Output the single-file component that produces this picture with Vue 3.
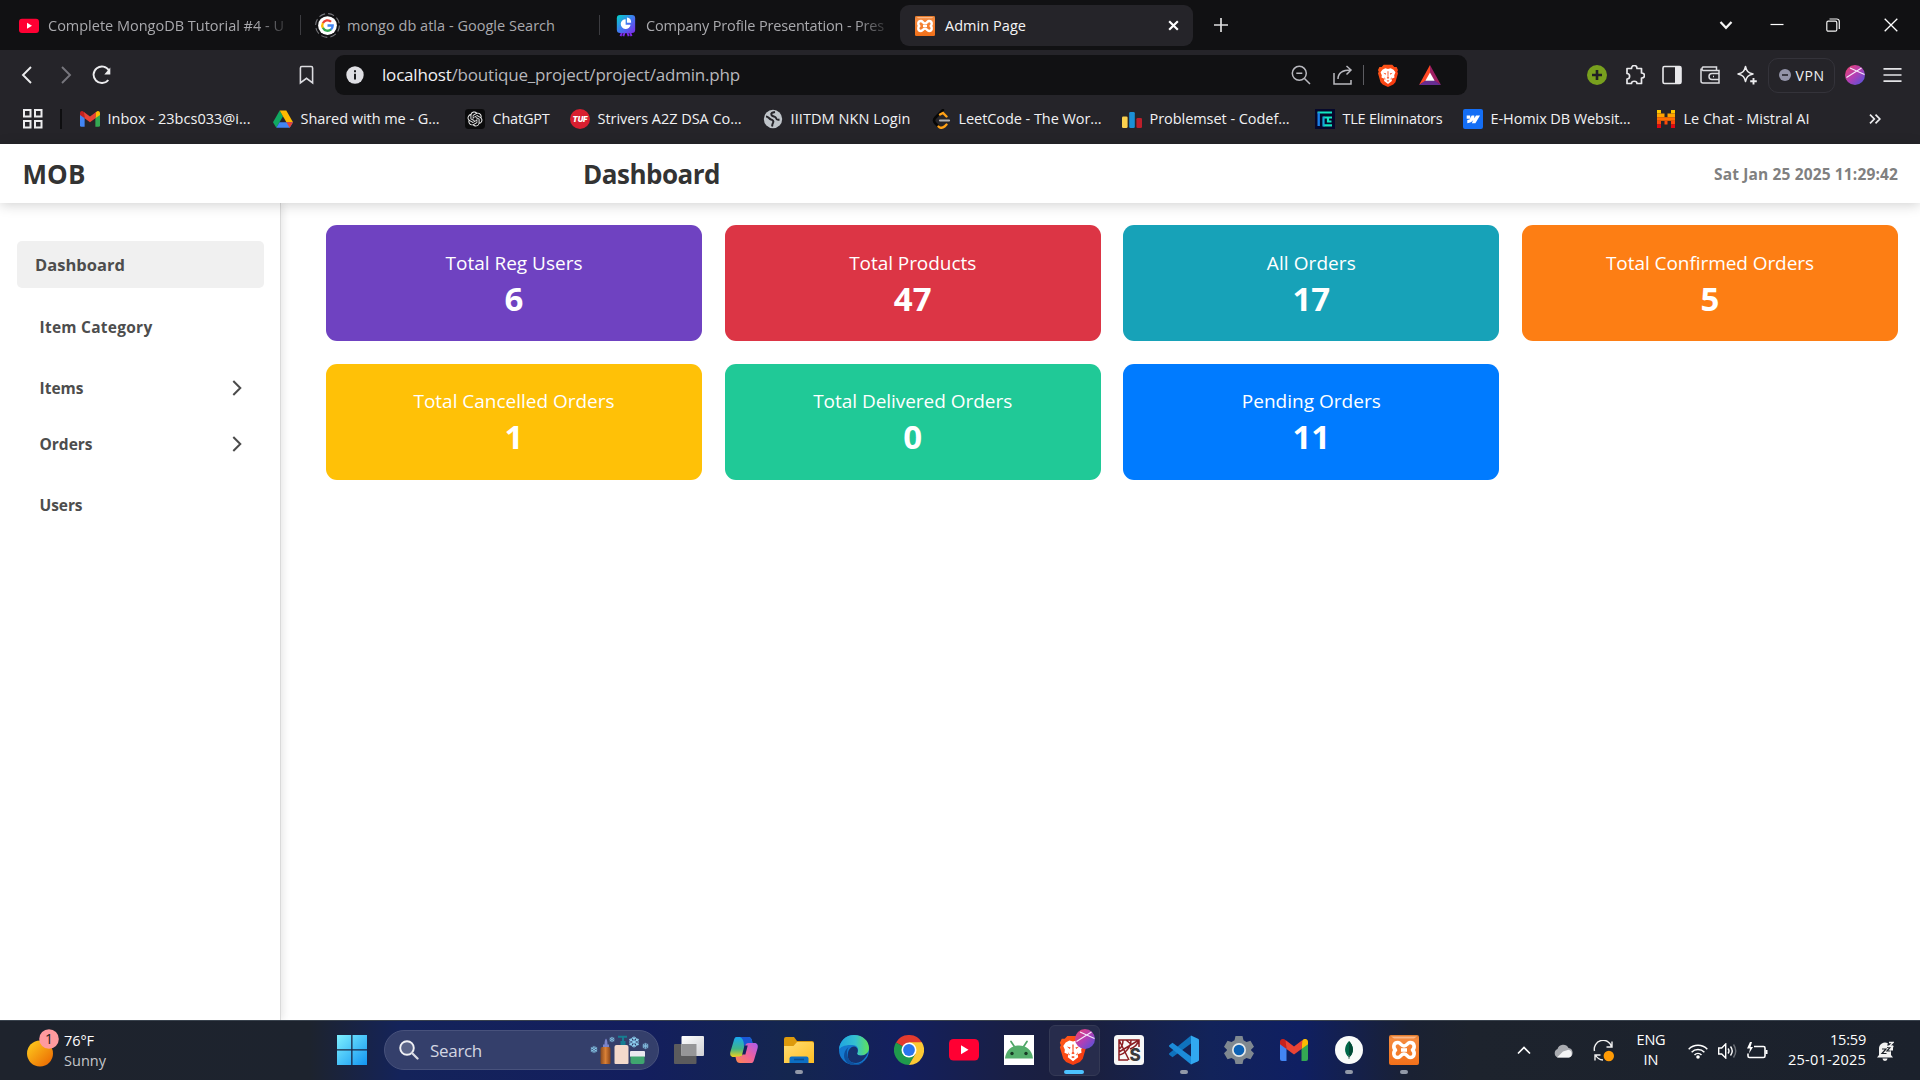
<script setup>
// Sets letter-spacing so that a label takes exactly its given width.
const vFit = {
  mounted(el, { value }) {
    if (!value) return
    const natural = el.getBoundingClientRect().width
    el.style.letterSpacing = (value - natural) / el.textContent.length + 'px'
  },
}

const tabs = [
  { icon: 'youtube', title: 'Complete MongoDB Tutorial #4 - U', w: 236 },
  { icon: 'google', title: 'mongo db atla - Google Search', w: 208 },
  { icon: 'deck', title: 'Company Profile Presentation - Pres', w: 238 },
]

const bookmarks = [
  { icon: 'gmail', title: 'Inbox - 23bcs033@i...', w: 143, slot: 193 },
  { icon: 'drive', title: 'Shared with me - G...', w: 139, slot: 192 },
  { icon: 'chatgpt', title: 'ChatGPT', w: 57, slot: 105 },
  { icon: 'tuf', title: 'Strivers A2Z DSA Co...', w: 144, slot: 193 },
  { icon: 'globe', title: 'IIITDM NKN Login', w: 120, slot: 168 },
  { icon: 'leetcode', title: 'LeetCode - The Wor...', w: 143, slot: 191 },
  { icon: 'codeforces', title: 'Problemset - Codef...', w: 140, slot: 193 },
  { icon: 'tle', title: 'TLE Eliminators', w: 100, slot: 148 },
  { icon: 'webflow', title: 'E-Homix DB Websit...', w: 140, slot: 193 },
  { icon: 'mistral', title: 'Le Chat - Mistral AI', w: 126, slot: 211 },
]

const menu = [
  { label: 'Item Category', w: 113 },
  { label: 'Items', w: 44, arrow: true },
  { label: 'Orders', w: 53, arrow: true, tight: true },
  { label: 'Users', w: 43 },
]

const cards = [
  { label: 'Total Reg Users', value: 6, w: 137, color: '#6f42c1' },
  { label: 'Total Products', value: 47, w: 127, color: '#dc3545' },
  { label: 'All Orders', value: 17, w: 89, color: '#17a2b8' },
  { label: 'Total Confirmed Orders', value: 5, w: 208, color: '#fd7e14' },
  { label: 'Total Cancelled Orders', value: 1, w: 201, color: '#ffc107' },
  { label: 'Total Delivered Orders', value: 0, w: 199, color: '#20c997' },
  { label: 'Pending Orders', value: 11, w: 139, color: '#007bff' },
]

const apps = [
  { icon: 'taskview' },
  { icon: 'copilot' },
  { icon: 'folder', open: true },
  { icon: 'edge' },
  { icon: 'chrome' },
  { icon: 'youtube' },
  { icon: 'android' },
  { icon: 'brave', active: true },
  { icon: 'spyder' },
  { icon: 'vscode', open: true },
  { icon: 'settings' },
  { icon: 'gmail' },
  { icon: 'mongo', open: true },
  { icon: 'xampp', open: true },
]
</script>

<template>
  <svg class="defs" aria-hidden="true">
    <defs>
      <linearGradient id="g-deck" x1="0" y1="0" x2="1" y2="1"><stop offset="0" stop-color="#00d5c8" /><stop offset=".5" stop-color="#3f7af0" /><stop offset="1" stop-color="#7d2ae8" /></linearGradient>
      <linearGradient id="g-profile" x1="0" y1="0" x2="1" y2="1"><stop offset="0" stop-color="#f0436a" /><stop offset=".5" stop-color="#b23fb5" /><stop offset="1" stop-color="#4655e0" /></linearGradient>
      <linearGradient id="g-win" x1="0" y1="0" x2="1" y2="1"><stop offset="0" stop-color="#7ef0ff" /><stop offset="1" stop-color="#1295f2" /></linearGradient>
      <linearGradient id="g-sun" x1="0" y1="0" x2="1" y2="1"><stop offset="0" stop-color="#ffd21f" /><stop offset="1" stop-color="#ea6100" /></linearGradient>
      <linearGradient id="g-tv" x1="0" y1="0" x2="1" y2="1"><stop offset="0" stop-color="#fff" /><stop offset="1" stop-color="#cfd0d4" /></linearGradient>
      <linearGradient id="g-fold" x1="0" y1="0" x2="1" y2="1"><stop offset="0" stop-color="#ffdd74" /><stop offset="1" stop-color="#ffbe22" /></linearGradient>
      <linearGradient id="g-edge" x1="0" y1=".3" x2="1" y2=".3"><stop offset="0" stop-color="#1fa5e0" /><stop offset=".55" stop-color="#35c1d0" /><stop offset="1" stop-color="#5fe35a" /></linearGradient>
      <linearGradient id="g-brave" x1="0" y1="0" x2="1" y2="1"><stop offset="0" stop-color="#ff5a1a" /><stop offset="1" stop-color="#f5350f" /></linearGradient>
      <linearGradient id="g-cop1" x1="0" y1="0" x2="0" y2="1"><stop offset="0" stop-color="#19a7f2" /><stop offset=".6" stop-color="#41b586" /><stop offset="1" stop-color="#f2d21c" /></linearGradient>
      <linearGradient id="g-cop2" x1="0" y1="1" x2="1" y2="0"><stop offset="0" stop-color="#ff8a4a" /><stop offset=".5" stop-color="#f0619c" /><stop offset="1" stop-color="#a95cf0" /></linearGradient>
      <linearGradient id="g-xampp" x1="0" y1="0" x2="0" y2="1"><stop offset="0" stop-color="#e07a2c" /><stop offset=".15" stop-color="#f58a3e" /><stop offset="1" stop-color="#f2701a" /></linearGradient>
      <linearGradient id="g-amber" x1="0" x2="1"><stop offset="0" stop-color="#8a4a1e" /><stop offset=".5" stop-color="#d98036" /><stop offset="1" stop-color="#8a4519" /></linearGradient>

      <symbol id="i-youtube" viewBox="0 0 30 30"><rect y="4" width="30" height="21.5" rx="4.5" fill="#ff0033" /><path d="M12 10.3v9l7.5-4.5z" fill="#fff" /></symbol>
      <symbol id="i-google" viewBox="0 0 24 24">
        <circle cx="12" cy="12" r="11.4" fill="none" stroke="#77777c" stroke-width="1" stroke-dasharray="6 3" /><circle cx="12" cy="12" r="9" fill="#fff" />
        <g fill="none" stroke-width="2.2"><path d="M15.4 8.4A5 5 0 0 0 7.5 9.8" stroke="#ea4335" /><path d="M7.6 9.6a5 5 0 0 0 0 4.8" stroke="#fbbc05" /><path d="M7.6 14.2a5 5 0 0 0 7.8 1.6" stroke="#34a853" /><path d="M12 12h5a5 5 0 0 1-1.7 3.9" stroke="#4285f4" /></g>
      </symbol>
      <symbol id="i-deck" viewBox="0 0 20 24"><path d="M6 18l-2 5M14 18l2 5M9 18l-2 5M11 18l2 5" stroke="#7d2ae8" stroke-width="2.2" /><rect width="20" height="19.5" rx="3.5" fill="url(#g-deck)" /><path d="M9.600 4.500a5.400 5.400 0 1 0 5.400 6.200h-5.400z" fill="#fff" /><path d="M11 2.800a5.400 5.400 0 0 1 4.600 5.600H11z" fill="#fff" /></symbol>
      <symbol id="i-xampp" viewBox="0 0 30 30"><rect width="30" height="30" rx="2" fill="url(#g-xampp)" /><path d="M2 1.500h26l-3 2H5z" fill="#fbb787" /><g fill="none" stroke="#fff" stroke-width="3.600" stroke-linejoin="round"><path d="M9 7.500c2.500 0 3 3.500 6 3.500s3.500-3.500 6-3.500c5 0 5 5.500 2.500 7.500 2.500 2 2.500 7.500-2.500 7.500-2.500 0-3-3.500-6-3.500s-3.500 3.500-6 3.500c-5 0-5-5.500-2.500-7.500C4 13 4 7.500 9 7.500z" /><path d="M12 15h6" /></g></symbol>
      <symbol id="i-gmail" viewBox="0 0 28 22"><path d="M0 3.500V20a2 2 0 0 0 2 2h4.500V9z" fill="#4285f4" /><path d="M28 3.500V20a2 2 0 0 1-2 2h-4.500V9z" fill="#34a853" /><path d="M21.500 2.500V10L28 5.300V3c0-3-3-4-5-2.300z" fill="#fbbc04" /><path d="M6.500 2.500V10L0 5.300V3C0 0 3-1 5 .7z" fill="#c5221f" /><path d="M5.500 1.100L14 7.600l8.500-6.500-1 8.900-7.500 5.600L6.500 10z" fill="#ea4335" /></symbol>
      <symbol id="i-drive" viewBox="0 0 20 20"><path d="M6.700 1.500L0 13.300l3.300 5.500L10 7.200z" fill="#11a861" /><path d="M6.700 1.500h6.600L20 13.300h-6.600z" fill="#ffba00" /><path d="M6.500 13.300H20l-3.300 5.500H3.300z" fill="#4285f4" /><path d="M13.400 13.300H20l-3.300 5.500z" fill="#ea4335" /></symbol>
      <symbol id="i-chatgpt" viewBox="-4 -4 32 32"><rect x="-4" y="-4" width="32" height="32" rx="5.500" fill="#0b0b0c" /><path fill="#f0f0f0" d="M22.2819 9.8211a5.9847 5.9847 0 0 0-.5157-4.9108 6.0462 6.0462 0 0 0-6.5098-2.9A6.0651 6.0651 0 0 0 4.9807 4.1818a5.9847 5.9847 0 0 0-3.9977 2.9 6.0462 6.0462 0 0 0 .7427 7.0966 5.98 5.98 0 0 0 .511 4.9107 6.051 6.051 0 0 0 6.5146 2.9001A5.9847 5.9847 0 0 0 13.2599 24a6.0557 6.0557 0 0 0 5.7718-4.2058 5.9894 5.9894 0 0 0 3.9977-2.9001 6.0557 6.0557 0 0 0-.7475-7.0729zm-9.022 12.6081a4.4755 4.4755 0 0 1-2.8764-1.0408l.1419-.0804 4.7783-2.7582a.7948.7948 0 0 0 .3927-.6813v-6.7369l2.02 1.1686a.071.071 0 0 1 .038.052v5.5826a4.504 4.504 0 0 1-4.4945 4.4944zm-9.6607-4.1254a4.4708 4.4708 0 0 1-.5346-3.0137l.142.0852 4.783 2.7582a.7712.7712 0 0 0 .7806 0l5.8428-3.3685v2.3324a.0804.0804 0 0 1-.0332.0615L9.74 19.9502a4.4992 4.4992 0 0 1-6.1408-1.6464zM2.3408 7.8956a4.485 4.485 0 0 1 2.3655-1.9728V11.6a.7664.7664 0 0 0 .3879.6765l5.8144 3.3543-2.0201 1.1685a.0757.0757 0 0 1-.071 0l-4.8303-2.7865A4.504 4.504 0 0 1 2.3408 7.872zm16.5963 3.8558L13.1038 8.364 15.1192 7.2a.0757.0757 0 0 1 .071 0l4.8303 2.7913a4.4944 4.4944 0 0 1-.6765 8.1042v-5.6772a.79.79 0 0 0-.407-.667zm2.0107-3.0231l-.142-.0852-4.7735-2.7818a.7759.7759 0 0 0-.7854 0L9.409 9.2297V6.8974a.0662.0662 0 0 1 .0284-.0615l4.8303-2.7866a4.4992 4.4992 0 0 1 6.6802 4.66zM8.3065 12.863l-2.02-1.1638a.0804.0804 0 0 1-.038-.0567V6.0742a4.4992 4.4992 0 0 1 7.3757-3.4537l-.142.0805L8.704 5.459a.7948.7948 0 0 0-.3927.6813zm1.0976-2.3654l2.602-1.4998 2.6069 1.4998v2.9994l-2.5974 1.4997-2.6067-1.4997Z" /></symbol>
      <symbol id="i-tuf" viewBox="0 0 20 20"><circle cx="10" cy="10" r="10" fill="#d81f30" /><text x="10" y="12.700" text-anchor="middle" font-family="Inter, sans-serif" font-weight="900" font-style="italic" font-size="7.600" fill="#fff">TUF</text></symbol>
      <symbol id="i-globe" viewBox="0 0 20 20"><circle cx="10" cy="10" r="9.200" fill="#bfc4c9" /><path d="M3 7.500c2.500 0 3 2.500 5 3s3 2 2 3.500-.5 2-1 3.500M12 3c-2.500.500-4.500 1-3.500 3s4 1 4.500 3 1.500 2 3.500 1.500" stroke="#26252a" stroke-width="2" fill="none" /></symbol>
      <symbol id="i-leetcode" viewBox="0 0 20 20"><path d="M12 1L4.500 8.500c-2 2-2 4 0 6l3 3" fill="none" stroke="#070707" stroke-width="2.500" stroke-linecap="round" /><path d="M9 5.500l3-1.500 3.500 3.500M7.500 17.500c2 2 4 1.500 6 0l2-2" fill="none" stroke="#ffa116" stroke-width="2.400" stroke-linecap="round" /><path d="M9 11.500h9" stroke="#b3b3b3" stroke-width="2.200" stroke-linecap="round" /></symbol>
      <symbol id="i-codeforces" viewBox="0 0 20 20"><rect y="7.500" width="5.600" height="11.500" rx="1.300" fill="#fbd04e" /><rect x="7.200" y="3" width="5.600" height="16" rx="1.300" fill="#1b90d6" /><rect x="14.400" y="9" width="5.600" height="10" rx="1.300" fill="#bd1f2b" /></symbol>
      <symbol id="i-tle" viewBox="0 0 20 20"><rect width="20" height="20" fill="#06082c" /><path d="M2.500 3.500H17M8.500 16.300H17M8.500 8.500H17M13 9.500v3h3.500" fill="none" stroke="#12e6c0" stroke-width="2.200" /><path d="M3.700 3.500V17" stroke="#1a7fe8" stroke-width="2.400" /><path d="M8.500 7.500v10" stroke="#13a9d8" stroke-width="2.200" /></symbol>
      <symbol id="i-webflow" viewBox="0 0 20 20"><rect width="20" height="20" rx="2" fill="#146ef5" /><path d="M17 6.500l-4.600 7.700H8.800l1.500-3.200C9 12.700 7 14 4.300 14.200v-3.100s2-.1 3-1.300H3.700V6.500h3.500v2.700l1.500-2.700h2.600v2.700l1.700-2.700z" fill="#fff" /></symbol>
      <symbol id="i-mistral" viewBox="0 0 20 20"><path d="M1 1h4v3.600H1zM15 1h4v3.600h-4z" fill="#ffc800" /><path d="M1 4.600h7.500v3.600H1zM11.500 4.600H19v3.600h-7.500z" fill="#ffa300" /><path d="M1 8.200h18v3.600H1z" fill="#ff6f00" /><path d="M1 11.800h4v3.600H1zM8.500 11.800h3v3.600h-3zM15 11.800h4v3.600h-4z" fill="#fb4a0a" /><path d="M1 15.400h4V19H1zM15 15.400h4V19h-4z" fill="#e30613" /></symbol>
      <symbol id="i-brave" viewBox="0 0 28 32">
        <path d="M8 1h12l2.800 3L26 4l2 4.200-1 2.600 1 2.200-3.600 12.300-3 3.400L14 32l-7.400-3.300-3-3.400L0 13l1-2.200L0 8.200 2 4h3.200z" fill="url(#g-brave)" />
        <path d="M14 7l3.800-1.200 4 2.200 2.600 3.600-1.700 4 .4 3.200-4 1.800.4 3.200L14 28l-5.500-4.200.4-3.200-4-1.800.4-3.200-1.700-4L6.200 8l4-2.200z" fill="#fff" />
        <path d="M7.500 12.300l4 .9-1 1.700zM20.500 12.300l-4 .9 1 1.700zM13.300 10h1.400l-.2 8 1.300 1.500-1.800 1-1.800-1 1.300-1.500zM8.500 18l2.300 3.300-1.300.2zM19.500 18l-2.300 3.300 1.300.2zM12 23.500l2-1 2 1-2 1.300z" fill="#f9481a" />
      </symbol>
      <symbol id="i-taskview" viewBox="0 0 30 30"><rect y="9" width="22.500" height="20" rx="1" fill="#5b5b5d" /><rect x="7.500" y="1" width="22.500" height="20" rx="1" fill="url(#g-tv)" /><path d="M7.500 9h15v12h-15z" fill="#969698" /></symbol>
      <symbol id="i-copilot" viewBox="0 0 30 30">
        <path d="M7.500 2H19c2.200 0 3.200 1 3.800 3l.8 3.500h-4.200c-2 0-3 1-3.500 3l-2 7.500c-.6 2-1.600 3-3.600 3H4.500C1.500 22 .6 19.500 1.500 16.500l3-10C5.200 3.800 5.800 2 7.500 2z" fill="url(#g-cop1)" /><path d="M14 2h5c2.200 0 3.200 1 3.800 3l.8 3.500h-4.200c-2 0-3 1-3.500 3L15 15c0-5 .5-11-4-13z" fill="#1a57d6" />
        <path d="M22.500 28H11c-2.200 0-3.200-1-3.800-3l-.8-3.500h4.200c2 0 3-1 3.500-3l2-7.500c.6-2 1.600-3 3.600-3h5.800c3 0 3.900 2.500 3 5.500l-3 10c-.7 2.700-1.300 4.500-3 4.500z" fill="url(#g-cop2)" />
        <path d="M15.500 10.500h3.200l-2.300 9h-3.200z" fill="#14225c" />
      </symbol>
      <symbol id="i-folder" viewBox="0 0 30 30"><path d="M0 4a2 2 0 0 1 2-2h8l3 4h15a2 2 0 0 1 2 2v6H0z" fill="#dd9a0c" /><path d="M0 11h9.500l3.500-4h15a2 2 0 0 1 2 2v19H0z" fill="url(#g-fold)" /><path d="M5.500 28v-4.500a2 2 0 0 1 2-2h15a2 2 0 0 1 2 2V28z" fill="#0c6fc4" /><path d="M10 24.500h10" stroke="#0a4f92" stroke-width="1.600" /></symbol>
      <symbol id="i-edge" viewBox="0 0 30 30"><circle cx="15" cy="15" r="15" fill="#1479cf" /><path d="M0 14.500C.5 6 7 0 15 0c9 0 15 6 15 13 0 5-4 7.500-7.500 7.500-4 0-5-1.700-4-3 1.500-3 .5-7.500-5.500-7.500C6.500 9.500 1 12 0 14.500z" fill="url(#g-edge)" /><path d="M18.500 17.500c-1 1.300 0 3 4 3 2.500 0 4.700-1 6-3 .8 0-3 10-11.500 10.500-7 0-9-5-8-10 .5-3.500 3-6.500 6-6.500 3.500.5 4.500 3.500 3.500 6z" fill="#16316e" /><path d="M9.500 12C7 16 7.500 24 13 27.500c4.500 2.500 9 1 12-1.500-5 7-14 4.500-17.500 1-4-4-3-11 2-15z" fill="#0e4f9c" /></symbol>
      <symbol id="i-chrome" viewBox="0 0 30 30"><path d="M15 15L2 7.500A15 15 0 0 1 28 7.500z" fill="#e33b2e" /><path d="M15 15L2 7.500A15 15 0 0 0 15 30l6.500-11z" fill="#1f9a4c" /><path d="M15 7.500h13A15 15 0 0 1 15 30l6.500-11.200z" fill="#fcc934" /><path d="M15 15V7.500H28L21.500 19z" fill="#fcc934" /><circle cx="15" cy="15" r="7.500" fill="#fff" /><circle cx="15" cy="15" r="5.900" fill="#2a75ec" /></symbol>
      <symbol id="i-android" viewBox="0 0 30 30"><path d="M0 0h30v30H0z" fill="#fff" /><path d="M7 6.500l4 6M23 6.500l-4 6" stroke="#4fa567" stroke-width="1.700" stroke-linecap="round" /><path d="M1 23.500C2 14.500 8 10.500 15 10.500s13 4 14 13z" fill="#55ae6c" /><circle cx="8" cy="18.500" r="1.700" fill="#173a24" /><circle cx="22" cy="18.500" r="1.700" fill="#173a24" /></symbol>
      <symbol id="i-spyder" viewBox="0 0 30 30"><rect width="30" height="30" rx="3.500" fill="#f7f7f7" /><g fill="none" stroke="#8c1d22" stroke-width="1.500"><path d="M14 25H5V5h20v7M5 5l10 20M9 5c0 5-2 8-4 9M17 5c0 7-6 14-12 15M25 5L5 17M25 5c-1 4-4 7-9 9M12 5l6 5" /></g><text x="15.500" y="26" font-family="Inter, sans-serif" font-weight="800" font-size="17" fill="#3b3b3b">S</text></symbol>
      <symbol id="i-vscode" viewBox="0 0 30 30"><path d="M22 .5l7 3.200c.600.300 1 .8 1 1.500v19.600c0 .7-.4 1.200-1 1.500l-7 3.200z" fill="#31a8f0" /><path d="M22 .5v8L3.500 22.300.3 19.700c-.4-.4-.4-1 0-1.400z" fill="#0f72bd" /><path d="M22 29.500v-8L3.500 7.700.3 10.300c-.4.400-.4 1 0 1.400z" fill="#1c8bd8" /></symbol>
      <symbol id="i-settings" viewBox="0 0 30 30"><path d="M11.500 1h7l1 4.200 3 1.700 4-1.200 3.500 6-3 3v.600l3 3-3.500 6-4-1.200-3 1.700-1 4.200h-7l-1-4.200-3-1.700-4 1.200-3.500-6 3-3v-.600l-3-3 3.500-6 4 1.200 3-1.700z" fill="#7f8890" /><circle cx="15" cy="15" r="7" fill="#e4e8ea" /><circle cx="15" cy="15" r="5.300" fill="#0d62b5" /></symbol>
      <symbol id="i-mongo" viewBox="0 0 30 30"><circle cx="15" cy="15" r="14" fill="#f9fbfa" /><path d="M15 6c5 5 5.500 12 0 16.500C9.500 18 10 11 15 6z" fill="#00684a" /><path d="M15 6c5 5 5.500 12 0 16.500z" fill="#024a36" /><path d="M15 20v4" stroke="#5c7a6e" stroke-width="1" /></symbol>
      <symbol id="i-profile" viewBox="0 0 20 20"><circle cx="10" cy="10" r="10" fill="url(#g-profile)" /><path d="M1.500 12.500L16.500 3M5 3l14.500 6.500" stroke="#f6e9fb" stroke-width="1.100" /></symbol>
      <symbol id="i-flake" viewBox="-10 -10 20 20"><g stroke="#8fd3f2" stroke-width="1.800" fill="none"><path id="arm" d="M0-9V9M-3-7.500L0-4.500 3-7.500M-3 7.500L0 4.500 3 7.500" /><use href="#arm" transform="rotate(60)" /><use href="#arm" transform="rotate(120)" /></g></symbol>
    </defs>
  </svg>

  <div class="screen">
    <header class="browser">
      <div class="tabstrip">
        <div v-for="t in tabs" :key="t.icon" class="tab">
          <span class="tab-icon"><svg :class="['fav', t.icon]"><use :href="'#i-' + t.icon" /></svg></span>
          <span class="tab-title"><span v-fit="t.w">{{ t.title }}</span></span>
        </div>
        <div class="tab current">
          <span class="tab-icon"><svg class="fav"><use href="#i-xampp" /></svg></span>
          <span class="tab-title"><span v-fit="81">Admin Page</span></span>
          <svg class="close" viewBox="0 0 12 12"><path d="M2 2l8 8M10 2l-8 8" stroke="#fff" stroke-width="2" /></svg>
        </div>
        <svg class="plus" viewBox="0 0 14 14"><path d="M7 0v14M0 7h14" stroke="#dededf" stroke-width="1.700" /></svg>
        <div class="window-buttons">
          <svg viewBox="0 0 14 14"><path d="M1.500 4L7 9.800 12.500 4" fill="none" stroke="#f4f4f4" stroke-width="2.200" /></svg>
          <svg viewBox="0 0 14 14"><path d="M.5 6.500h13" stroke="#fff" stroke-width="1.200" /></svg>
          <svg viewBox="0 0 14 14"><g fill="none" stroke="#f4f4f4" stroke-width="1.200"><rect x=".8" y="3.200" width="10" height="10" rx="1.500" /><path d="M3.500 1h7.300a2.500 2.500 0 0 1 2.500 2.500v7.500" /></g></svg>
          <svg viewBox="0 0 14 14"><path d="M.7.700l12.600 12.600M13.300.7L.7 13.300" stroke="#fff" stroke-width="1.300" /></svg>
        </div>
      </div>

      <div class="toolbar">
        <div class="nav">
          <svg viewBox="0 0 20 20"><path d="M13 2L5 10l8 8" fill="none" stroke="#ececee" stroke-width="1.900" /></svg>
          <svg viewBox="0 0 20 20"><path d="M7 2l8 8-8 8" fill="none" stroke="#77767d" stroke-width="1.900" /></svg>
          <svg viewBox="0 0 20 20"><path d="M16.300 15A8.300 8.300 0 1 1 17 5.500" fill="none" stroke="#ececee" stroke-width="1.900" /><path d="M18.300 2.500v7h-6z" fill="#ececee" /></svg>
        </div>
        <svg class="mark" viewBox="0 0 16 20"><path d="M1.500 2.500q0-1.500 1.500-1.500h10q1.500 0 1.500 1.500v16L8 13.500l-6.500 5z" fill="none" stroke="#dcdce0" stroke-width="1.700" /></svg>
        <div class="address">
          <svg class="info" viewBox="0 0 18 18"><circle cx="9" cy="9" r="8.700" fill="#dfdfe4" /><path d="M9 7.700v5.800M9 4.300v2" stroke="#111214" stroke-width="1.900" /></svg>
          <span class="url"><span v-fit="358"><b>localhost</b>/boutique_project/project/admin.php</span></span>
          <svg class="a-zoom" viewBox="0 0 20 20"><g fill="none" stroke="#b9b9bf" stroke-width="1.500"><circle cx="8.300" cy="8.300" r="7" /><path d="M13.500 13.500l5.500 5.500M5.300 8.300h6" /></g></svg>
          <svg class="a-share" viewBox="0 0 20 20"><g fill="none" stroke="#b9b9bf" stroke-width="1.500"><path d="M1 8v11h17v-4M5 14c0-6 4-9 13-9M13.500 1l4.500 4-4.500 4.500" /></g></svg>
          <i class="bar"></i>
          <svg class="a-brave"><use href="#i-brave" /></svg>
          <svg class="a-bat" viewBox="0 0 22 20"><path d="M11 0L0 20l11-6.500z" fill="#ff4724" /><path d="M11 0l11 20-11-6.500z" fill="#9e1f63" /><path d="M0 20h22l-6.500-4.500h-9z" fill="#662d91" /><path d="M11 7.500l4.600 8.300H6.400z" fill="#fff" /></svg>
        </div>
        <div class="extensions">
          <svg viewBox="0 0 20 20"><circle cx="10" cy="10" r="10" fill="#78a01e" /><path d="M10 5v10M5 10h10" stroke="#202024" stroke-width="2.600" /></svg>
          <svg viewBox="0 0 20 20"><path d="M2 3.500h4.500c0-4 5.500-4 5.500 0h4.500V8c4 0 4 5 0 5v5.500h-4.500c0-3-5.500-3-5.500 0H2V14c3.500 0 3.500-5.500 0-5.500z" fill="none" stroke="#e9e9ec" stroke-width="1.700" stroke-linejoin="round" /></svg>
          <svg viewBox="0 0 20 20"><rect x="1" y="1.500" width="18" height="17" rx="1.500" fill="none" stroke="#e9e9ec" stroke-width="1.600" /><path d="M13 2h6v16h-6z" fill="#e9e9ec" /></svg>
          <svg viewBox="0 0 20 20"><g fill="none" stroke="#dcdce0" stroke-width="1.500"><path d="M16.500 5V2H3a2 2 0 0 0 0 3.500h16V18H3a2 2 0 0 1-2-2V3.500" /><path d="M19 8.500h-7a3 3 0 0 0 0 6h7" /><path d="M13 11.500h1" /></g></svg>
          <svg viewBox="0 0 20 20"><path d="M8.500 1.500c1.200 5 2.200 6 7.500 7.500-5.300 1.500-6.300 2.500-7.500 7.500C7.300 11.500 6.300 10.500 1 9c5.300-1.500 6.300-2.500 7.500-7.500z" fill="none" stroke="#ececee" stroke-width="1.500" stroke-linejoin="round" /><path d="M16.500 13v6.500M13.200 16.300h6.600" stroke="#ececee" stroke-width="1.900" /></svg>
        </div>
        <div class="vpn">
          <svg viewBox="0 0 12 12"><circle cx="6" cy="6" r="6" fill="#9394a8" /><path d="M3 6h6" stroke="#26252b" stroke-width="1.600" /></svg>
          <span v-fit="29">VPN</span>
        </div>
        <svg class="avatar"><use href="#i-profile" /></svg>
        <svg class="burger" viewBox="0 0 20 16"><path d="M.5 1.500h19M.5 8h19M.5 14.500h19" stroke="#e4e4e7" stroke-width="1.700" /></svg>
      </div>

      <div class="bookmarks">
        <svg class="grid" viewBox="0 0 20 20"><g fill="none" stroke="#ececee" stroke-width="2"><rect x="1" y="1" width="6.500" height="6.500" /><rect x="12" y="1" width="6.500" height="6.500" /><rect x="1" y="12" width="6.500" height="6.500" /><rect x="12" y="12" width="6.500" height="6.500" /></g></svg>
        <i class="bm-bar"></i>
        <div v-for="b in bookmarks" :key="b.icon" class="bookmark" :style="{ width: b.slot + 'px' }">
          <svg><use :href="'#i-' + b.icon" /></svg>
          <span v-fit="b.w">{{ b.title }}</span>
        </div>
        <svg class="more" viewBox="0 0 12 10"><path d="M1 .7L5.300 5 1 9.300M6.500.7L10.800 5 6.500 9.300" fill="none" stroke="#ececee" stroke-width="1.700" /></svg>
      </div>
    </header>

    <section class="page">
      <div class="topbar">
        <span class="brand"><span v-fit="63">MOB</span></span>
        <span class="heading"><span v-fit="137">Dashboard</span></span>
        <span class="date"><span v-fit="184">Sat Jan 25 2025 11:29:42</span></span>
      </div>
      <div class="body">
        <nav class="sidebar">
          <a class="item selected"><span v-fit="90">Dashboard</span></a>
          <a v-for="m in menu" :key="m.label" :class="['item', { tight: m.tight }]">
            <span v-fit="m.w">{{ m.label }}</span>
            <svg v-if="m.arrow" viewBox="0 0 10 16"><path d="M1.300 1l7 7-7 7" fill="none" stroke="#4b4b4b" stroke-width="2" /></svg>
          </a>
        </nav>
        <main class="cards">
          <article v-for="c in cards" :key="c.label" class="card" :style="{ background: c.color }">
            <p><span v-fit="c.w">{{ c.label }}</span></p>
            <strong>{{ c.value }}</strong>
          </article>
        </main>
      </div>
    </section>

    <footer class="taskbar">
      <div class="weather">
        <svg viewBox="0 0 32 44"><circle cx="13" cy="26.500" r="13" fill="url(#g-sun)" /><circle cx="22" cy="12" r="9.800" fill="#ff9a9e" /><text x="22" y="17" text-anchor="middle" font-size="14" font-family="Open Sans, sans-serif" fill="#1c1c1c">1</text></svg>
        <div><span class="temp"><span v-fit="30">76°F</span></span><span class="sky"><span v-fit="42">Sunny</span></span></div>
      </div>
      <svg class="start" viewBox="0 0 30 30"><path d="M0 0h14.200v14.200H0zM15.500 0H30v14.200H15.500zM0 15.500h14.200V30H0zM15.500 15.500H30V30H15.500z" fill="url(#g-win)" /></svg>
      <div class="search">
        <svg class="lens" viewBox="0 0 20 20"><circle cx="8" cy="8" r="6.800" fill="#5a6488" stroke="#f0f1f5" stroke-width="1.900" /><path d="M13 13l5.500 5.500" stroke="#d7d9e2" stroke-width="2.300" stroke-linecap="round" /></svg>
        <span v-fit="52">Search</span>
        <svg class="bottles" viewBox="0 0 60 30">
          <path d="M13 12.500V9.500h1.500c0-3 .5-5 1.500-6 1 1 1.500 3 1.500 6H19v3z" fill="#7b83c8" /><path d="M10.500 14q0-2 2-2h6q2 0 2 2v14q0 1-1 1h-8q-1 0-1-1z" fill="url(#g-amber)" />
          <path d="M28 .8h9v2h-3V6h1.500v4h-5V6H32V2.800h-4z" fill="#167d91" /><path d="M24.500 12q0-2 2-2h10q2 0 2 2v16q0 1-1 1h-12q-1 0-1-1z" fill="#f3d9cb" />
          <rect x="40" y="16" width="15" height="6" rx="1" fill="#e9e9ef" /><path d="M40.500 21.500h14V27q0 2-2 2h-10q-2 0-2-2z" fill="#3fa66f" />
          <use href="#i-flake" x="0" y="10" width="8" height="9" /><use href="#i-flake" x="19" y="1" width="6" height="7" /><use href="#i-flake" x="38" y="1" width="12" height="12" /><use href="#i-flake" x="52" y="7" width="7" height="8" />
        </svg>
      </div>
      <div class="apps">
        <div v-for="a in apps" :key="a.icon" :class="['app', { open: a.open, active: a.active }]">
          <svg><use :href="'#i-' + a.icon" /></svg>
          <svg v-if="a.active" class="badge"><use href="#i-profile" /></svg>
        </div>
      </div>
      <div class="tray">
        <svg class="t-up" viewBox="0 0 14 9"><path d="M1 7.500l6-6 6 6" fill="none" stroke="#fff" stroke-width="1.700" /></svg>
        <svg class="t-cloud" viewBox="0 0 20 14"><path d="M5 13.500a4.500 4.500 0 0 1-.5-8.500A6 6 0 0 1 15.500 4a4.800 4.800 0 0 1 0 9.500z" fill="#a9abb0" /><path d="M4 13.500L10 7.500l5.500-1.700a4 4 0 0 1 .5 7.700z" fill="#f4f4f5" /></svg>
        <svg class="t-sync" viewBox="0 0 22 22"><g fill="none" stroke="#f0f0f0" stroke-width="1.400"><path d="M1.500 11A8.800 8.800 0 0 1 18.500 6.500M19 1.500v5.500h-5.500M10 20A9 9 0 0 1 2.500 15M2 20.500V15h5.500" /></g><circle cx="15.800" cy="16" r="5.200" fill="#ff9b05" /></svg>
        <div class="lang"><span v-fit="29">ENG</span><span v-fit="15">IN</span></div>
        <svg class="t-wifi" viewBox="0 0 20 16"><g fill="none" stroke="#fff" stroke-width="1.500"><path d="M.7 6.200a13 13 0 0 1 18.600 0M3.600 9.200a9 9 0 0 1 12.800 0M6.500 12a5 5 0 0 1 7 0" /></g><circle cx="10" cy="14" r="1.800" fill="#fff" /></svg>
        <svg class="t-sound" viewBox="0 0 20 16"><g fill="none" stroke="#fff" stroke-width="1.400"><path d="M.7 5h3l4-4v14l-4-4h-3zM10 5.500q2 2.500 0 5M12.500 3.500q3.500 4.500 0 9" /><path d="M15.500 1.500q4.500 6.500 0 13" stroke="#6d7178" /></g></svg>
        <svg class="t-battery" viewBox="0 0 22 17"><path d="M8 4.500h9.500q1.500 0 1.500 1.500v8q0 1.500-1.500 1.500h-14Q2 15.500 2 14v-2.500" fill="none" stroke="#fff" stroke-width="1.600" /><path d="M19.500 8h2v4h-2z" fill="#fff" /><path d="M4 0L1 6.500h3L3 11.500l4-6.500H4.500L6 0z" fill="#fff" /></svg>
        <div class="clock"><span v-fit="36">15:59</span><span v-fit="78">25-01-2025</span></div>
        <svg class="t-bell" viewBox="0 0 18 20"><path d="M3 14V8a6 6 0 0 1 9-5.500l-1 2h6v5h-2V14l2 2.500H1zM6.500 17.500h5a2.500 2.500 0 0 1-5 0z" fill="#f2f2f2" /><path d="M6 8h4L6 12.500h4.500M11 6.500h3L11 10h3.500" fill="none" stroke="#1d2229" stroke-width="1.200" /><path d="M13 1.500h4l-4 4h4.500" fill="none" stroke="#f2f2f2" stroke-width="1.300" /></svg>
      </div>
    </footer>
  </div>
</template>

<style>
body {
  margin: 0;
  background: #fff;
}
</style>

<style scoped>
.defs {
  position: absolute;
  width: 0;
  height: 0;
}
.screen {
  width: 1920px;
  height: 1080px;
  display: flex;
  flex-direction: column;
  overflow: hidden;
  font-family: 'Open Sans', 'Noto Sans', sans-serif;
  background: #fff;
}
.screen span {
  white-space: nowrap;
}
.screen svg {
  flex: none;
  display: block;
}

/* browser chrome */
.browser {
  height: 144px;
  flex: none;
  background: #252429;
  color: #f1f1f3;
}
.tabstrip {
  height: 50px;
  display: flex;
  align-items: center;
  background: #111113;
}
.tab {
  box-sizing: border-box;
  width: 299px;
  height: 20px;
  padding-left: 12px;
  display: flex;
  align-items: center;
  border-right: 1px solid #3c3c40;
  color: #a9a9ad;
  font-size: 14.5px;
}
.tab:first-child {
  width: 301px;
  padding-left: 15px;
}
.tab:nth-child(3) {
  width: 300px;
  border: 0;
}
.tab-icon {
  width: 28px;
  padding-top: 1px;
  display: flex;
  justify-content: center;
}
.fav {
  width: 20px;
  height: 20px;
}
.fav.google {
  width: 25px;
  height: 25px;
}
.fav.deck {
  height: 22px;
}
.tab-title {
  margin-left: 6px;
  padding-top: 2px;
  line-height: 22px;
}
.tab:first-child .tab-title {
  margin-left: 5px;
  mask-image: linear-gradient(90deg, #000 88%, rgba(0, 0, 0, 0.25) 100%);
}
.tab:nth-child(3) .tab-title {
  mask-image: linear-gradient(90deg, #000 88%, rgba(0, 0, 0, 0.25) 100%);
}
.tab-title > span {
  display: inline-block;
}
.tab.current {
  width: 293px;
  height: 41px;
  padding: 0 13px 0 11px;
  border: 0;
  border-radius: 9px;
  background: #252429;
  color: #f5f5f6;
}
.close {
  width: 13px;
  height: 13px;
  margin-left: auto;
}
.plus {
  width: 14px;
  height: 14px;
  margin-left: 21px;
}
.window-buttons {
  margin-left: auto;
  padding-right: 22px;
  display: flex;
  gap: 42px;
}
.window-buttons svg {
  width: 14px;
  height: 14px;
}
.window-buttons svg:first-child {
  margin-right: -5px;
}
.window-buttons svg:last-child {
  margin-left: 2px;
}
.toolbar {
  height: 50px;
  display: flex;
  align-items: center;
}
.nav {
  display: flex;
  padding-left: 18px;
  gap: 17px;
}
.nav svg {
  width: 20px;
  height: 20px;
}
.mark {
  width: 15px;
  height: 20px;
  margin-left: 187px;
}
.address {
  box-sizing: border-box;
  width: 1132px;
  height: 40px;
  margin-left: 21px;
  padding: 0 26px 0 11px;
  display: flex;
  align-items: center;
  border-radius: 9px;
  background: #111113;
}
.info {
  width: 18px;
  height: 18px;
}
.url {
  flex: 1;
  margin-left: 18px;
  padding-bottom: 2px;
  font-size: 17px;
  color: #b7b7bc;
}
.url > span {
  display: inline-block;
}
.url b {
  font-weight: 400;
  color: #f1f1f4;
}
.a-zoom,
.a-share {
  width: 20px;
  height: 20px;
}
.a-share {
  margin-left: 22px;
}
.bar {
  width: 1px;
  height: 20px;
  margin: 0 14px 0 10px;
  background: #5c5c61;
}
.a-brave {
  width: 20px;
  height: 23px;
}
.a-bat {
  width: 22px;
  height: 20px;
  margin-left: 21px;
}
.extensions {
  display: flex;
  margin-left: 120px;
  gap: 17.5px;
}
.extensions svg {
  width: 20px;
  height: 20px;
}
.vpn {
  box-sizing: border-box;
  width: 67px;
  height: 35px;
  margin-left: 11px;
  display: flex;
  align-items: center;
  justify-content: center;
  gap: 5px;
  border: 1px solid #34333a;
  border-radius: 10px;
  font-size: 14px;
}
.vpn svg {
  width: 12px;
  height: 12px;
}
.avatar {
  width: 20px;
  height: 20px;
  margin-left: 10px;
}
.burger {
  width: 19px;
  height: 16px;
  margin-left: 18px;
}
.bookmarks {
  height: 38px;
  display: flex;
  align-items: center;
}
.grid {
  width: 20px;
  height: 20px;
  margin-left: 23px;
}
.bm-bar {
  width: 2px;
  height: 20px;
  margin: 0 18px 0 17px;
  background: #0e0e10;
}
.bookmark {
  flex: none;
  display: flex;
  align-items: center;
  gap: 7.5px;
  font-size: 14.5px;
}
.bookmark span {
  padding-bottom: 2px;
}
.bookmark svg {
  width: 20px;
  height: 20px;
}
.more {
  width: 12px;
  height: 10px;
  margin-left: 2px;
}

/* admin page */
.page {
  height: 876px;
  flex: none;
  display: flex;
  flex-direction: column;
}
.topbar {
  position: relative;
  z-index: 1;
  height: 59px;
  flex: none;
  display: flex;
  align-items: center;
  background: #fff;
  box-shadow: 0 2px 12px rgba(0, 0, 0, 0.18);
  color: #333;
}
.brand,
.heading {
  width: 560.5px;
  padding-left: 22.5px;
  font-size: 26px;
  font-weight: 700;
}
.heading {
  width: auto;
  padding-left: 0;
}
.topbar span > span,
.item > span,
.card span {
  display: inline-block;
}
.date {
  margin-left: auto;
  padding-right: 22px;
  font-size: 15.5px;
  font-weight: 700;
  color: #808080;
}
.body {
  flex: 1;
  display: flex;
}
.sidebar {
  box-sizing: border-box;
  width: 281px;
  padding: 38px 16px 0 17px;
  border-right: 1px solid #dadada;
  box-shadow: 2px 0 8px rgba(0, 0, 0, 0.1);
  color: #4d4d4d;
  font-weight: 700;
}
.item {
  box-sizing: border-box;
  height: 46px;
  margin-top: 15px;
  padding: 0 22px 0 22.5px;
  display: flex;
  align-items: center;
  justify-content: space-between;
  font-size: 15.5px;
}
.item.selected {
  height: 47px;
  margin: 0 0 16px;
  padding-left: 18px;
  border-radius: 5px;
  background: #f0f0f0;
  font-size: 16.5px;
}
.item.tight {
  margin-top: 10px;
}
.item svg {
  width: 10px;
  height: 16px;
}
.cards {
  display: grid;
  grid-template-columns: repeat(4, 376px);
  grid-auto-rows: 116px;
  column-gap: 22.67px;
  row-gap: 22.67px;
  padding: 22px 0 0 45px;
  align-content: start;
}
.card {
  display: flex;
  flex-direction: column;
  align-items: center;
  border-radius: 11px;
  color: #fff;
}
.card p {
  margin: 23.6px 0 0;
  font-size: 19px;
  line-height: 28px;
}
.card strong {
  font-size: 33px;
  line-height: 44px;
  font-weight: 700;
}

/* taskbar */
.taskbar {
  box-sizing: border-box;
  height: 60px;
  flex: none;
  display: flex;
  align-items: center;
  border-top: 1px solid #39424d;
  color: #fff;
  background: linear-gradient(90deg, #1e232d 0, #1d232e 310px, #14235a 400px, #131e5e 640px, #14264f 790px, #131f5e 900px, #191f45 1010px, #1b1f3c 1080px, #12235a 1210px, #0f1f62 1300px, #1a2133 1410px, #1d232d 1470px, #1b212c 1920px);
}
.weather {
  width: 337px;
  display: flex;
  box-sizing: border-box;
  padding-left: 27px;
  font-size: 14.500px;
}
.weather svg {
  width: 32px;
  height: 44px;
  margin-right: 5px;
  margin-top: -4px;
}
.temp,
.sky {
  display: block;
  line-height: 20px;
}
.temp > span,
.sky > span {
  display: inline-block;
}
.sky {
  color: #c4c7cb;
}
.start {
  width: 30px;
  height: 30px;
  margin-bottom: 1px;
}
.search {
  box-sizing: border-box;
  width: 275px;
  height: 40px;
  margin: 0 0 1px 17px;
  padding: 0 8px 0 14px;
  display: flex;
  align-items: center;
  border: 1px solid #48527c;
  border-radius: 20px;
  background: #343f6b;
  color: #d3d6e2;
  font-size: 17px;
}
.lens {
  width: 20px;
  height: 20px;
  margin-right: 11px;
}
.bottles {
  width: 60px;
  height: 30px;
  margin-left: auto;
}
.apps {
  display: flex;
  margin-left: 2.500px;
}
.app {
  position: relative;
  width: 55px;
  height: 58px;
  margin-bottom: 1px;
  display: flex;
  align-items: center;
  justify-content: center;
}
.app svg {
  width: 30px;
  height: 30px;
}
.app:nth-child(12) svg {
  width: 28px;
  height: 22px;
}
.app.open::after,
.app.active::after {
  content: '';
  position: absolute;
  left: 23.500px;
  top: 49px;
  width: 8px;
  height: 4px;
  border-radius: 2px;
  background: #9299a8;
}
.app.active::after {
  left: 17.500px;
  width: 20px;
  background: #4cc2ff;
}
.app.active::before {
  content: '';
  position: absolute;
  left: 2px;
  top: 4px;
  width: 49px;
  height: 49px;
  border: 1px solid #343955;
  border-radius: 6px;
  background: #272c4c;
}
.app.active svg {
  position: relative;
  right: 1px;
}
.app.active svg.badge {
  position: absolute;
  width: 20px;
  height: 20px;
  right: auto;
  left: 28px;
  top: 8px;
}
.tray {
  margin-left: auto;
  padding-right: 26px;
  display: flex;
  align-items: center;
  font-size: 14.500px;
}
.t-up {
  width: 14px;
  height: 9px;
}
.t-cloud {
  width: 20px;
  height: 14px;
  margin-left: 22px;
}
.t-sync {
  width: 22px;
  height: 22px;
  margin-left: 20px;
}
.lang,
.clock {
  width: 30px;
  margin: 0 0 1px 21px;
  display: flex;
  flex-direction: column;
  align-items: center;
  line-height: 20px;
}
.t-wifi {
  width: 20px;
  height: 16px;
  margin-left: 22px;
}
.t-sound {
  width: 20px;
  height: 16px;
  margin-left: 10px;
}
.t-battery {
  width: 22px;
  height: 17px;
  margin-left: 8px;
}
.clock {
  width: 78px;
  margin-left: 20px;
  align-items: flex-end;
}
.t-bell {
  width: 18px;
  height: 20px;
  margin-left: 10px;
}
</style>
